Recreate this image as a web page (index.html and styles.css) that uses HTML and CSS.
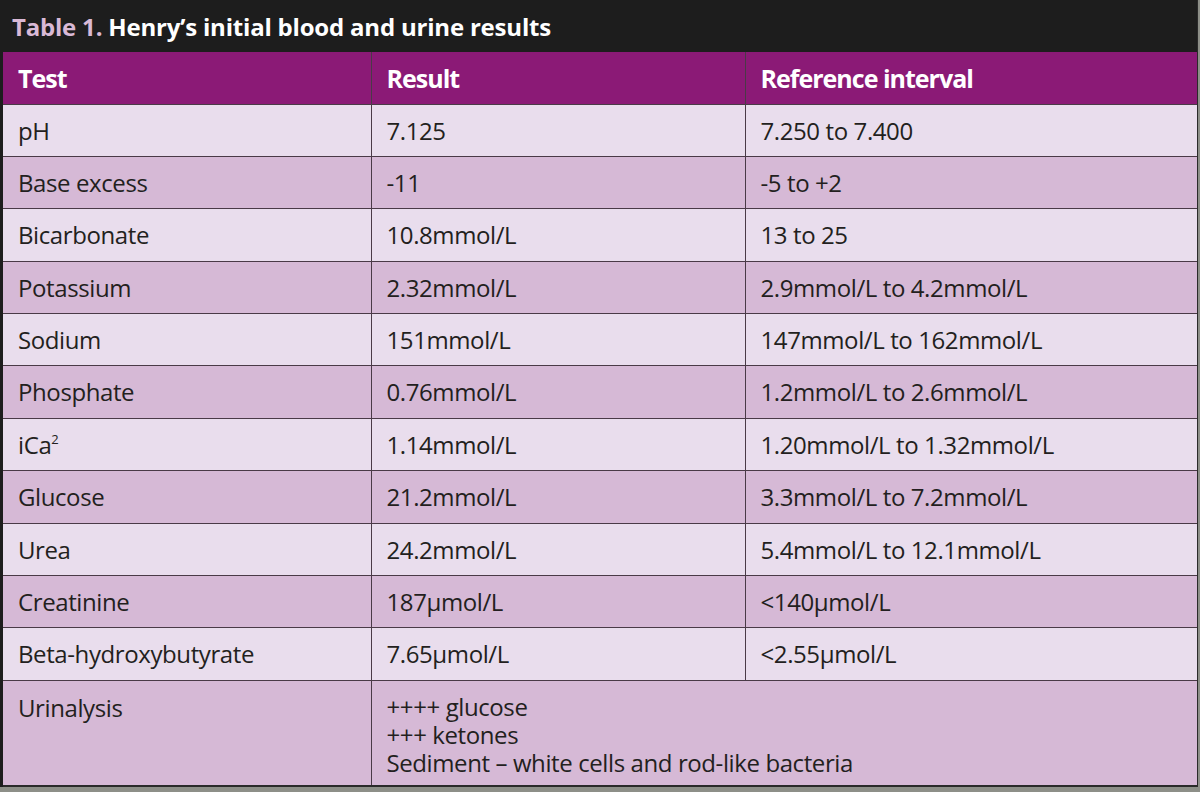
FILE: index.html
```html
<!DOCTYPE html>
<html>
<head>
<meta charset="utf-8">
<link rel="stylesheet" href="styles.css">
</head>
<body>
<div class="frame">
  <div class="title"><span class="label">Table 1.</span> Henry’s initial blood and urine results</div>
  <table class="results">
    <colgroup><col class="c1"><col class="c2"><col class="c3"></colgroup>
    <thead>
      <tr><th>Test</th><th>Result</th><th>Reference interval</th></tr>
    </thead>
    <tbody>
      <tr class="light"><td>pH</td><td>7.125</td><td>7.250 to 7.400</td></tr>
      <tr class="dark"><td>Base excess</td><td>-11</td><td>-5 to +2</td></tr>
      <tr class="light"><td>Bicarbonate</td><td>10.8mmol/L</td><td>13 to 25</td></tr>
      <tr class="dark"><td>Potassium</td><td>2.32mmol/L</td><td>2.9mmol/L to 4.2mmol/L</td></tr>
      <tr class="light"><td>Sodium</td><td>151mmol/L</td><td>147mmol/L to 162mmol/L</td></tr>
      <tr class="dark"><td>Phosphate</td><td>0.76mmol/L</td><td>1.2mmol/L to 2.6mmol/L</td></tr>
      <tr class="light"><td>iCa<sup>2</sup></td><td>1.14mmol/L</td><td>1.20mmol/L to 1.32mmol/L</td></tr>
      <tr class="dark"><td>Glucose</td><td>21.2mmol/L</td><td>3.3mmol/L to 7.2mmol/L</td></tr>
      <tr class="light"><td>Urea</td><td>24.2mmol/L</td><td>5.4mmol/L to 12.1mmol/L</td></tr>
      <tr class="dark"><td>Creatinine</td><td>187µmol/L</td><td>&lt;140µmol/L</td></tr>
      <tr class="light"><td>Beta-hydroxybutyrate</td><td>7.65µmol/L</td><td>&lt;2.55µmol/L</td></tr>
      <tr class="dark tall"><td>Urinalysis</td><td colspan="2"><div class="line">++++ glucose</div><div class="line">+++ ketones</div><div class="line">Sediment – white cells and rod-like bacteria</div></td></tr>
    </tbody>
  </table>
</div>
</body>
</html>
```

FILE: styles.css
```css
html, body {
  margin: 0;
  padding: 0;
  background: #8d8f88;
}
.frame {
  width: 1198px;
  height: 787px;
  overflow: hidden;
  background: #1d1d1d;
  box-sizing: border-box;
  border-right: 1px solid #2a2a2a;
  font-family: "Open Sans", "Liberation Sans", sans-serif;
  color: #231f20;
}
.title {
  height: 52px;
  box-sizing: border-box;
  padding: 12px 0 0 12px;
  color: #ffffff;
  font-weight: 700;
  font-size: 24px;
  letter-spacing: -0.2px;
  line-height: 30px;
}
.label {
  color: #d9b9d6;
}
.results {
  border-collapse: collapse;
  width: 1194px;
  margin-left: 3px;
  table-layout: fixed;
}
.c1 { width: 368px; }
.c2 { width: 374px; }
.results th, .results td {
  border: 1px solid #4a3a47;
  text-align: left;
  vertical-align: top;
  padding: 11px 0 0 15px;
  box-sizing: border-box;
  height: 52.4px;
  font-size: 24px;
  font-weight: 400;
  line-height: 30px;
  letter-spacing: -0.4px;
}
.results th {
  background: #8b1a76;
  color: #ffffff;
  font-weight: 700;
  font-size: 25px;
  letter-spacing: -1px;
  border-top: none;
  height: 52px;
  padding-top: 11px;
}
.results tr > :first-child { border-left: none; }
.results tr > :last-child { border-right: none; }
.light td { background: #e9dded; }
.dark td { background: #d6b9d6; }
.tall td { height: 106px; border-bottom: 2px solid #2a2a2a; padding-top: 12px; }
.line { line-height: 28px; height: 28px; }
sup {
  font-size: 13px;
  line-height: 0;
  vertical-align: 10px;
}
```
